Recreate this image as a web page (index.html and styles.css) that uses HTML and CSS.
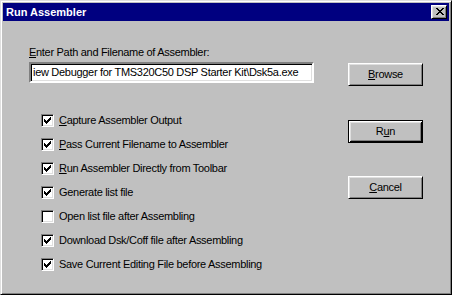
FILE: index.html
```html
<!DOCTYPE html>
<html lang="en">
  <head>
    <meta charset="UTF-8" />
    <title>Run Assembler</title>
    <link rel="stylesheet" href="styles.css">
  </head>
  <body>
    <div class="window">
      <div class="titlebar">
        <span class="title">Run Assembler</span>
        <button class="close-btn">
          <svg width="8" height="7" viewBox="0 0 8 7" shape-rendering="crispEdges">
            <path d="M0 0h2v1H0z M6 0h2v1H6z M1 1h2v1H1z M5 1h2v1H5z M2 2h4v1H2z M3 3h2v1H3z M2 4h4v1H2z M1 5h2v1H1z M5 5h2v1H5z M0 6h2v1H0z M6 6h2v1H6z" fill="#000" />
          </svg>
        </button>
      </div>

      <div class="dialog">
        <div class="left">
          <div class="path-label"><u>E</u>nter Path and Filename of Assembler:</div>
          <div class="path-field">iew Debugger for TMS320C50 DSP Starter Kit\Dsk5a.exe</div>

          <ul class="options">
            <li class="option">
              <span class="check"><svg width="9" height="9" viewBox="0 0 9 9" shape-rendering="crispEdges"><path d="M7 1h1v1H7z M6 2h2v1H6z M1 3h1v1H1z M5 3h3v1H5z M1 4h2v1H1z M4 4h3v1H4z M1 5h5v1H1z M2 6h3v1H2z M3 7h1v1H3z" /></svg></span>
              <span><u>C</u>apture Assembler Output</span>
            </li>
            <li class="option">
              <span class="check"><svg width="9" height="9" viewBox="0 0 9 9" shape-rendering="crispEdges"><path d="M7 1h1v1H7z M6 2h2v1H6z M1 3h1v1H1z M5 3h3v1H5z M1 4h2v1H1z M4 4h3v1H4z M1 5h5v1H1z M2 6h3v1H2z M3 7h1v1H3z" /></svg></span>
              <span><u>P</u>ass Current Filename to Assembler</span>
            </li>
            <li class="option">
              <span class="check"><svg width="9" height="9" viewBox="0 0 9 9" shape-rendering="crispEdges"><path d="M7 1h1v1H7z M6 2h2v1H6z M1 3h1v1H1z M5 3h3v1H5z M1 4h2v1H1z M4 4h3v1H4z M1 5h5v1H1z M2 6h3v1H2z M3 7h1v1H3z" /></svg></span>
              <span><u>R</u>un Assembler Directly from Toolbar</span>
            </li>
            <li class="option">
              <span class="check"><svg width="9" height="9" viewBox="0 0 9 9" shape-rendering="crispEdges"><path d="M7 1h1v1H7z M6 2h2v1H6z M1 3h1v1H1z M5 3h3v1H5z M1 4h2v1H1z M4 4h3v1H4z M1 5h5v1H1z M2 6h3v1H2z M3 7h1v1H3z" /></svg></span>
              <span>Generate list file</span>
            </li>
            <li class="option">
              <span class="check"></span>
              <span>Open list file after Assembling</span>
            </li>
            <li class="option">
              <span class="check"><svg width="9" height="9" viewBox="0 0 9 9" shape-rendering="crispEdges"><path d="M7 1h1v1H7z M6 2h2v1H6z M1 3h1v1H1z M5 3h3v1H5z M1 4h2v1H1z M4 4h3v1H4z M1 5h5v1H1z M2 6h3v1H2z M3 7h1v1H3z" /></svg></span>
              <span>Download Dsk/Coff file after Assembling</span>
            </li>
            <li class="option">
              <span class="check"><svg width="9" height="9" viewBox="0 0 9 9" shape-rendering="crispEdges"><path d="M7 1h1v1H7z M6 2h2v1H6z M1 3h1v1H1z M5 3h3v1H5z M1 4h2v1H1z M4 4h3v1H4z M1 5h5v1H1z M2 6h3v1H2z M3 7h1v1H3z" /></svg></span>
              <span>Save Current Editing File before Assembling</span>
            </li>
          </ul>
        </div>

        <div class="buttons">
          <button class="btn btn-browse"><u>B</u>rowse</button>
          <button class="btn btn-default btn-run">R<u>u</u>n</button>
          <button class="btn btn-cancel"><u>C</u>ancel</button>
        </div>
      </div>
    </div>
  </body>
</html>
```

FILE: styles.css
```css
body {
  margin: 0;
  font-family: "Liberation Sans", Arial, sans-serif;
  font-size: 11px;
  letter-spacing: -0.3px;
  color: #000;
  background-color: #c0c0c0;
}
.window {
  box-sizing: border-box;
  width: 452px;
  height: 295px;
  padding: 2px;
  background-color: #c0c0c0;
  border: 1px solid;
  border-color: #dfdfdf #000 #000 #dfdfdf;
  box-shadow: inset 1px 1px #fff, inset -1px -1px #808080;
}
.titlebar {
  height: 18px;
  background-color: #000080;
  display: flex;
  align-items: center;
  justify-content: space-between;
  padding: 0 2px 0 3px;
}
.title {
  color: #fff;
  font-weight: bold;
  letter-spacing: 0;
  line-height: 13px;
}
.close-btn {
  box-sizing: border-box;
  width: 16px;
  height: 14px;
  padding: 0;
  display: flex;
  align-items: center;
  justify-content: center;
  background-color: #c0c0c0;
  border: 1px solid;
  border-color: #fff #000 #000 #fff;
  box-shadow: inset 1px 1px #dfdfdf, inset -1px -1px #808080;
}
.close-btn svg {
  display: block;
  margin: 0 0 1px 1px;
}
.dialog {
  display: flex;
  padding: 25px 0 0 26px;
}
.left {
  width: 285px;
}
.path-label {
  line-height: 13px;
}
.path-field {
  box-sizing: border-box;
  height: 21px;
  margin-top: 3px;
  padding-left: 2px;
  line-height: 17px;
  white-space: nowrap;
  overflow: hidden;
  background-color: #fff;
  border: 2px solid;
  border-color: #808080 #fff #fff #808080;
  box-shadow: inset 1px 1px #000, inset -1px -1px #dfdfdf;
}
.options {
  list-style: none;
  margin: 31px 0 0 12px;
  padding: 0;
}
.option {
  display: flex;
  align-items: center;
  height: 13px;
  line-height: 13px;
  margin-bottom: 11px;
  white-space: nowrap;
}
.check {
  box-sizing: border-box;
  width: 13px;
  height: 13px;
  margin-right: 5px;
  background-color: #fff;
  border: 1px solid;
  border-color: #808080 #fff #fff #808080;
  box-shadow: inset 1px 1px #000, inset -1px -1px #dfdfdf;
  padding: 1px;
}
.check svg {
  display: block;
}
.buttons {
  display: flex;
  flex-direction: column;
  width: 75px;
  margin-left: 34px;
  padding-top: 17px;
}
.btn {
  box-sizing: border-box;
  width: 75px;
  height: 23px;
  padding: 0;
  font-family: inherit;
  font-size: 11px;
  letter-spacing: -0.3px;
  line-height: 13px;
  color: #000;
  background-color: #c0c0c0;
  border: 1px solid;
  border-color: #fff #000 #000 #fff;
  box-shadow: inset 1px 1px #dfdfdf, inset -1px -1px #808080;
}
.btn-default {
  border-color: #000;
  box-shadow: inset 1px 1px #fff, inset -1px -1px #000, inset 2px 2px #dfdfdf, inset -2px -2px #808080;
}
.btn-run {
  margin-top: 34px;
}
.btn-cancel {
  margin-top: 33px;
}
```
